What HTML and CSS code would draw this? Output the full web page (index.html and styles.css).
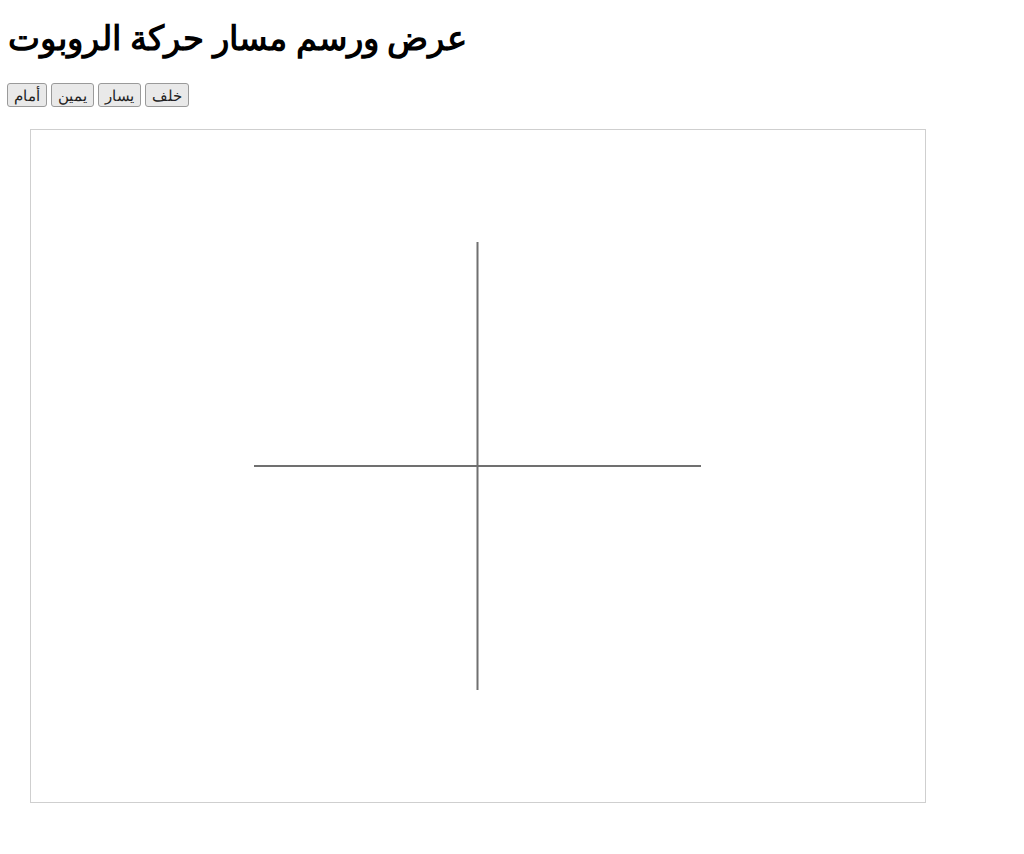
FILE: index.html
```html
<!DOCTYPE html>
<html lang="ar">
<head>
<meta charset="utf-8">
<title>عرض ورسم مسار حركة الروبوت</title>
<link rel="stylesheet" href="styles.css">
</head>
<body>
<h1 class="title">عرض ورسم مسار حركة الروبوت</h1>
<div class="controls">
  <button class="btn">أمام</button>
  <button class="btn">يمين</button>
  <button class="btn">يسار</button>
  <button class="btn">خلف</button>
</div>
<div class="stage">
  <svg class="canvas" width="894" height="672" viewBox="0 0 894 672">
    <line x1="223" y1="336" x2="670" y2="336" class="path"/>
    <line x1="446.5" y1="112" x2="446.5" y2="560" class="path"/>
  </svg>
</div>
</body>
</html>
```
FILE: styles.css
```css
body {
  margin: 0;
  padding: 0 7px;
  font-family: "Noto Sans", sans-serif;
  background: #fff;
  color: #000;
}
.title {
  font-family: "Noto Sans", sans-serif;
  font-size: 34px;
  font-weight: 600;
  margin: 0;
  padding-top: 14px;
  line-height: 46px;
  padding-left: 1px;
}
.controls {
  display: flex;
  gap: 4px;
  margin-top: 23px;
}
.btn {
  font-family: "Noto Sans", sans-serif;
  font-size: 15px;
  height: 24px;
  padding: 0 6px;
  border: 1px solid #9a9a9a;
  border-radius: 3px;
  background: #e9e9e9;
  color: #222;
}
.stage {
  margin-top: 22px;
  padding-left: 23px;
}
.canvas {
  display: block;
  border: 1px solid #cfcfcf;
  background: #fff;
}
.path {
  stroke: #707070;
  stroke-width: 2;
}
```
